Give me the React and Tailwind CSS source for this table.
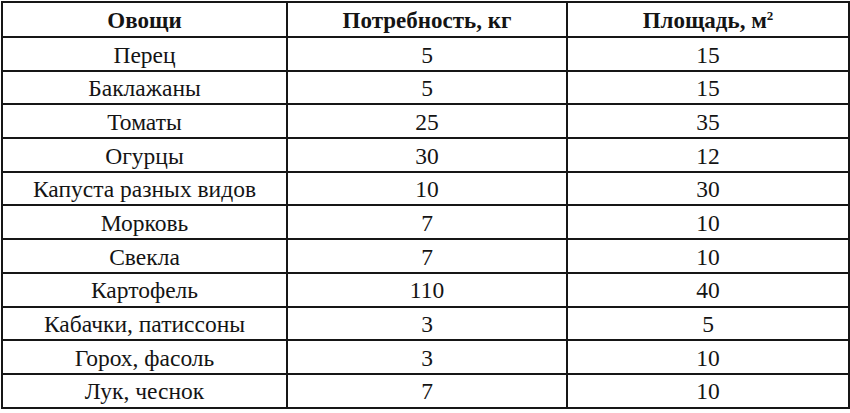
const rows = [
  ["Перец", "5", "15"],
  ["Баклажаны", "5", "15"],
  ["Томаты", "25", "35"],
  ["Огурцы", "30", "12"],
  ["Капуста разных видов", "10", "30"],
  ["Морковь", "7", "10"],
  ["Свекла", "7", "10"],
  ["Картофель", "110", "40"],
  ["Кабачки, патиссоны", "3", "5"],
  ["Горох, фасоль", "3", "10"],
  ["Лук, чеснок", "7", "10"],
];

const cell = "border-2 border-[#161616] text-center font-['Liberation_Serif',serif]";

export default function App() {
  return (
    <div className="w-[850px] h-[413px] bg-white pt-px pl-px font-['Liberation_Serif',serif]">
      <table className="w-[847px] table-fixed border-collapse border-2 border-[#161616] text-[#141414] font-['Liberation_Serif',serif]">
        <colgroup>
          <col className="w-[285px]" />
          <col className="w-[280px]" />
          <col className="w-[282px]" />
        </colgroup>
        <thead>
          <tr className="h-[35px]">
            <th className={`${cell} text-[23px] font-bold leading-none pt-[2px]`}>Овощи</th>
            <th className={`${cell} text-[23px] font-bold leading-none pt-[2px]`}>Потребность, кг</th>
            <th className={`${cell} text-[23px] font-bold leading-none pt-[2px]`}>
              Площадь, м<span className="text-[13px] align-[8px]">2</span>
            </th>
          </tr>
        </thead>
        <tbody>
          {rows.map(([name, need, area]) => (
            <tr key={name} className="h-[33.7px]">
              <td className={`${cell} text-[23.5px] leading-none pt-[3px]`}>{name}</td>
              <td className={`${cell} text-[23.5px] leading-none pt-[3px]`}>{need}</td>
              <td className={`${cell} text-[23.5px] leading-none pt-[3px]`}>{area}</td>
            </tr>
          ))}
        </tbody>
      </table>
    </div>
  );
}
